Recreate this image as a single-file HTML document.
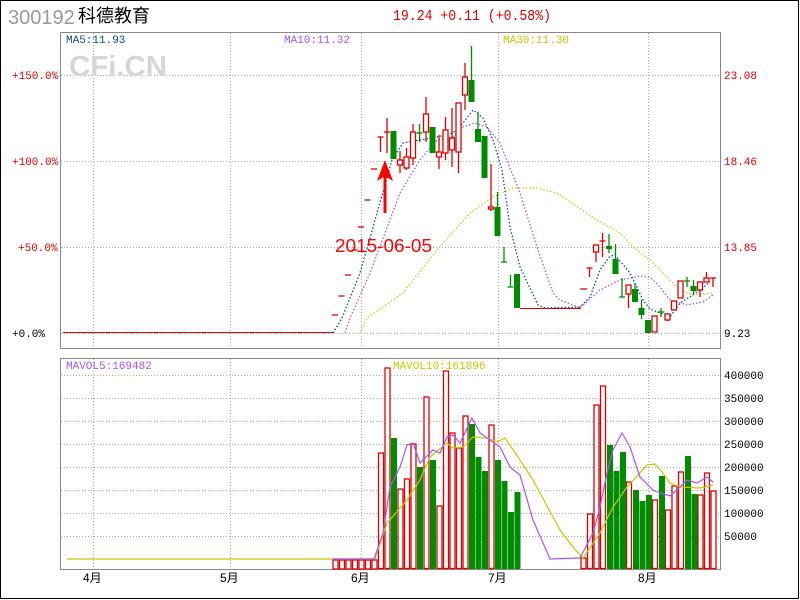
<!DOCTYPE html>
<html><head><meta charset="utf-8"><style>
html,body{margin:0;padding:0;background:#fff}
svg{display:block}
</style></head><body>
<svg width="800" height="600" viewBox="0 0 800 600" xmlns="http://www.w3.org/2000/svg" font-family="Liberation Mono, monospace">
<rect x="0.5" y="0.5" width="798" height="598" fill="#fff" stroke="#000"/>
<text x="8" y="24" font-family="Liberation Sans, sans-serif" font-size="20" fill="#999">300192</text>
<text x="78" y="22" font-family="Liberation Sans, 'Noto Sans CJK SC', sans-serif" font-size="18" fill="#000">科德教育</text>
<text x="393" y="20" font-size="15" fill="#d00" textLength="158" lengthAdjust="spacingAndGlyphs">19.24 +0.11 (+0.58%)</text>

<g stroke="#aaa" stroke-dasharray="1,2" stroke-width="1">
<line x1="93.5" y1="33" x2="93.5" y2="348"/><line x1="230.5" y1="33" x2="230.5" y2="348"/><line x1="361.5" y1="33" x2="361.5" y2="348"/><line x1="498.5" y1="33" x2="498.5" y2="348"/><line x1="648.5" y1="33" x2="648.5" y2="348"/>
<line x1="61" y1="75.5" x2="720" y2="75.5"/><line x1="61" y1="161.5" x2="720" y2="161.5"/><line x1="61" y1="247.5" x2="720" y2="247.5"/><line x1="61" y1="333.5" x2="720" y2="333.5"/>
<line x1="93.5" y1="359" x2="93.5" y2="569"/><line x1="230.5" y1="359" x2="230.5" y2="569"/><line x1="361.5" y1="359" x2="361.5" y2="569"/><line x1="498.5" y1="359" x2="498.5" y2="569"/><line x1="648.5" y1="359" x2="648.5" y2="569"/>
<line x1="61" y1="375.5" x2="720" y2="375.5"/><line x1="61" y1="398.5" x2="720" y2="398.5"/><line x1="61" y1="421.5" x2="720" y2="421.5"/><line x1="61" y1="444.5" x2="720" y2="444.5"/><line x1="61" y1="467.5" x2="720" y2="467.5"/><line x1="61" y1="490.5" x2="720" y2="490.5"/><line x1="61" y1="513.5" x2="720" y2="513.5"/><line x1="61" y1="536.5" x2="720" y2="536.5"/>
</g>
<rect x="60.5" y="32.5" width="660" height="316" fill="none" stroke="#888"/>
<rect x="60.5" y="358.5" width="660" height="211" fill="none" stroke="#888"/>

<text x="69" y="76" font-family="Liberation Sans, sans-serif" font-weight="bold" font-size="29" fill="#d6d6d6" textLength="98" lengthAdjust="spacingAndGlyphs">CFi.CN</text>
<text x="66" y="43" font-size="11" fill="#0b4c94">MA5:11.93</text>
<text x="284" y="43" font-size="11" fill="#a855f0">MA10:11.32</text>
<text x="503" y="43" font-size="11" fill="#c8c800">MA30:11.30</text>

<g font-size="11" fill="#d00">
<text x="12" y="79">+150.0%</text><text x="12" y="165">+100.0%</text><text x="18" y="251">+50.0%</text><text x="12" y="337" fill="#000">+0.0%</text>
<text x="724" y="79">23.08</text><text x="724" y="165">18.46</text><text x="724" y="251">13.85</text><text x="724" y="337" fill="#000">9.23</text>
</g>

<line x1="63" y1="332.5" x2="334" y2="332.5" stroke="#d00"/>
<line x1="520" y1="308.5" x2="581" y2="308.5" stroke="#d00"/>

<polyline fill="none" stroke="#c8c800" stroke-width="1.2" stroke-dasharray="1.5,2" points="360,333 367,318 403,293 437,250 470,213 493,197 513,188 537,188 557,193 597,220 620,233 633,247 650,260 667,277 680,290 693,295 713,293"/>
<polyline fill="none" stroke="#a855f0" stroke-width="1.3" stroke-dasharray="1.5,2" points="345,333 350,318 370,273 400,193 420,160 437,140 453,137 463,127 475,123 487,127 500,143 520,193 537,247 553,293 560,300 580,308 600,290 620,280 640,276 650,277 660,287 670,300 687,305 703,302 713,295"/>
<polyline fill="none" stroke="#0b4c94" stroke-width="1.3" stroke-dasharray="1.5,2" points="333,333 342,318 360,273 377,213 392,160 403,143 437,137 453,133 463,123 473,110 483,118 493,140 502,170 510,227 520,267 538,305 545,308 580,307 590,297 600,270 610,256 615,255 630,273 643,300 650,309 670,317 680,303 693,295 710,282"/>

<g stroke="#d00" stroke-width="1.3" fill="#fff">
<line x1="332" y1="315" x2="338" y2="315"/><line x1="338.5" y1="296" x2="344.5" y2="296"/><line x1="345" y1="275" x2="351" y2="275"/><line x1="351.5" y1="250" x2="357.5" y2="250"/><line x1="358" y1="227" x2="364" y2="227"/><line x1="364.5" y1="200" x2="370.5" y2="200"/><line x1="371" y1="169" x2="377" y2="169"/>
<line x1="377.5" y1="137" x2="383.5" y2="137"/><line x1="380.5" y1="137" x2="380.5" y2="152"/>
<line x1="387" y1="118" x2="387" y2="153"/><line x1="384" y1="132" x2="390" y2="132"/>
<line x1="400" y1="151" x2="400" y2="173"/><rect x="397.5" y="160" width="5" height="5"/>
<line x1="406.5" y1="148" x2="406.5" y2="170"/><rect x="404" y="157" width="5" height="11"/>
<line x1="413" y1="124" x2="413" y2="165"/><rect x="410.5" y="132" width="5" height="26"/>
<line x1="426" y1="97" x2="426" y2="142"/><rect x="423.5" y="114" width="5" height="18"/>
<line x1="439" y1="135" x2="439" y2="169"/><rect x="436.5" y="152" width="5" height="5"/>
<line x1="445.5" y1="117" x2="445.5" y2="160"/><rect x="443" y="130" width="5" height="23"/>
<line x1="452" y1="108" x2="452" y2="167"/><rect x="449.5" y="138" width="5" height="12"/>
<line x1="458.5" y1="103" x2="458.5" y2="173"/><rect x="456" y="103" width="5" height="49"/>
<line x1="465" y1="63" x2="465" y2="110"/><rect x="462.5" y="77" width="5" height="18"/>
<line x1="491" y1="164" x2="491" y2="211"/><rect x="488.5" y="207" width="5" height="2"/>
<line x1="580" y1="289" x2="587" y2="289"/>
<line x1="586.5" y1="268" x2="592.5" y2="268"/><line x1="589.5" y1="268" x2="589.5" y2="277"/>
<line x1="596" y1="245" x2="596" y2="262"/><rect x="593.5" y="245" width="5" height="7"/>
<line x1="602.5" y1="233" x2="602.5" y2="257"/><line x1="599.5" y1="241" x2="605.5" y2="241"/>
<line x1="628.5" y1="285" x2="628.5" y2="308"/><rect x="626" y="285" width="5" height="9"/>
<rect x="652" y="316" width="5" height="16"/>
<line x1="667.5" y1="313" x2="667.5" y2="321"/><rect x="665" y="314" width="5" height="6"/>
<rect x="671.5" y="301" width="5" height="9"/>
<rect x="678" y="281" width="5" height="17"/>
<line x1="700" y1="282" x2="700" y2="297"/><rect x="697.5" y="282" width="5" height="8"/>
<line x1="706.5" y1="272" x2="706.5" y2="282"/><rect x="704" y="278" width="5" height="4"/>
<line x1="710" y1="278" x2="716" y2="278"/><line x1="713" y1="278" x2="713" y2="287"/>
</g>
<g stroke="#008c00" stroke-width="1.3" fill="#008c00">
<rect x="390.5" y="131" width="6" height="28" stroke="none"/>
<line x1="419.5" y1="124" x2="419.5" y2="142"/><line x1="416.5" y1="133" x2="422.5" y2="133"/>
<rect x="429.5" y="127" width="6" height="26" stroke="none"/>
<line x1="471.5" y1="46" x2="471.5" y2="102"/><rect x="468.5" y="80" width="6" height="22" stroke="none"/>
<line x1="478" y1="112" x2="478" y2="142"/><rect x="475" y="129" width="6" height="13" stroke="none"/>
<rect x="481.5" y="136" width="6" height="42" stroke="none"/>
<line x1="497.5" y1="192" x2="497.5" y2="236"/><rect x="494.5" y="207" width="6" height="29" stroke="none"/>
<line x1="501" y1="262" x2="507" y2="262"/><line x1="504" y1="247" x2="504" y2="262"/>
<line x1="507.5" y1="287" x2="513.5" y2="287"/><line x1="510.5" y1="275" x2="510.5" y2="287"/>
<rect x="514" y="274" width="6" height="34" stroke="none"/>
<line x1="609" y1="234" x2="609" y2="253"/><rect x="606" y="246" width="6" height="3" stroke="none"/>
<line x1="615.5" y1="244" x2="615.5" y2="274"/><rect x="612.5" y="259" width="6" height="15" stroke="none"/>
<line x1="622" y1="278" x2="622" y2="297"/><line x1="619" y1="297" x2="625" y2="297"/>
<line x1="635" y1="283" x2="635" y2="302"/><rect x="632" y="289" width="6" height="13" stroke="none"/>
<line x1="641.5" y1="300" x2="641.5" y2="319"/><rect x="638.5" y="308" width="6" height="7" stroke="none"/>
<rect x="645" y="320" width="6" height="13" stroke="none"/>
<line x1="661" y1="308" x2="661" y2="317"/><line x1="657.5" y1="312" x2="664.5" y2="312"/>
<line x1="687" y1="277" x2="687" y2="287"/><line x1="684" y1="281" x2="690" y2="281"/>
<line x1="693.5" y1="280" x2="693.5" y2="295"/><rect x="690.5" y="286" width="6" height="5" stroke="none"/>
</g>

<line x1="385" y1="170" x2="385" y2="213" stroke="#f00" stroke-width="3"/>
<polygon points="385,160 377,181 385,176 393,181" fill="#f00"/>
<text x="335" y="252" font-family="Liberation Sans, sans-serif" font-size="18" fill="#f00" textLength="97" lengthAdjust="spacingAndGlyphs">2015-06-05</text>

<text x="66" y="369" font-size="11" fill="#a855f0">MAVOL5:169482</text>
<text x="393" y="369" font-size="11" fill="#c8c800">MAVOL10:161896</text>
<g font-size="11" fill="#000">
<text x="724" y="379">400000</text><text x="724" y="402">350000</text><text x="724" y="425">300000</text><text x="724" y="448">250000</text><text x="724" y="471">200000</text><text x="724" y="494">150000</text><text x="724" y="517">100000</text><text x="724" y="540">50000</text>
</g>
<g stroke="#d00" stroke-width="1.3" fill="#fff">
<rect x="333" y="560" width="5" height="9"/><rect x="339.5" y="560" width="5" height="9"/><rect x="346" y="560" width="5" height="9"/><rect x="352.5" y="560" width="5" height="9"/><rect x="359" y="560" width="5" height="9"/><rect x="365.5" y="560" width="5" height="9"/><rect x="372" y="560" width="5" height="9"/>
<rect x="378.5" y="453" width="5" height="115.5"/><rect x="385" y="368" width="5" height="200.5"/>
<rect x="398" y="489" width="5" height="79.5"/><rect x="404.5" y="479" width="5" height="89.5"/><rect x="411" y="444" width="5" height="124.5"/>
<rect x="424" y="397" width="5" height="171.5"/><rect x="437" y="506" width="5" height="62.5"/><rect x="443.5" y="371" width="5" height="197.5"/><rect x="450" y="433" width="5" height="135.5"/><rect x="456.5" y="448" width="5" height="120.5"/><rect x="463" y="416" width="5" height="152.5"/>
<rect x="489" y="425" width="5" height="143.5"/>
<rect x="581" y="558" width="5" height="10.5"/><rect x="587.5" y="514" width="5" height="54.5"/><rect x="594" y="405" width="5" height="163.5"/><rect x="600.5" y="386" width="5" height="182.5"/>
<rect x="626.5" y="482" width="5" height="86.5"/><rect x="652.5" y="500" width="5" height="68.5"/><rect x="665.5" y="510" width="5" height="58.5"/><rect x="672" y="486" width="5" height="82.5"/><rect x="678.5" y="472" width="5" height="96.5"/><rect x="698" y="495" width="5" height="73.5"/><rect x="704.5" y="473" width="5" height="95.5"/><rect x="711" y="491" width="5" height="77.5"/>
</g>
<g fill="#008c00">
<rect x="391" y="438" width="6" height="131"/><rect x="417" y="467" width="6" height="102"/><rect x="430" y="460" width="6" height="109"/>
<rect x="469" y="424" width="6" height="145"/><rect x="475.5" y="457" width="6" height="112"/><rect x="482" y="471" width="6" height="98"/>
<rect x="495" y="460" width="6" height="109"/><rect x="501.5" y="481" width="6" height="88"/><rect x="508" y="512" width="6" height="57"/><rect x="514.5" y="492" width="6" height="77"/>
<rect x="607" y="445" width="6" height="124"/><rect x="613.5" y="471" width="6" height="98"/><rect x="620" y="452" width="6" height="117"/>
<rect x="633" y="490" width="6" height="79"/><rect x="639.5" y="501" width="6" height="68"/><rect x="646" y="495" width="6" height="74"/>
<rect x="659" y="476" width="6" height="93"/><rect x="685" y="456" width="6" height="113"/><rect x="691.5" y="494" width="6" height="75"/>
</g>
<polyline fill="none" stroke="#c8c800" stroke-width="1.2" points="67,559 375,559 387,523 407,500 420,480 430,457 447,443 453,448 463,447 473,437 487,438 497,442 505,438 520,460 533,480 553,517 560,530 573,547 583,558 600,533 613,507 627,487 647,465 655,464 663,473 670,483 680,487 700,488 713,485"/>
<polyline fill="none" stroke="#a855f0" stroke-width="1.2" points="333,559 374,559 383,533 390,487 400,467 407,445 413,443 420,463 433,450 440,453 447,437 453,435 460,443 472,418 480,433 490,440 500,447 510,467 520,475 533,520 550,559 580,558 593,533 600,507 607,473 613,450 622,433 630,447 640,477 653,490 660,493 670,496 680,487 687,480 697,483 707,477 713,482"/>

<g font-family="Liberation Sans, 'Noto Sans CJK SC', sans-serif" font-size="12" fill="#000">
<text x="83" y="582">4月</text><text x="220" y="582">5月</text><text x="351" y="582">6月</text><text x="488" y="582">7月</text><text x="638" y="582">8月</text>
</g>
</svg>
</body></html>
